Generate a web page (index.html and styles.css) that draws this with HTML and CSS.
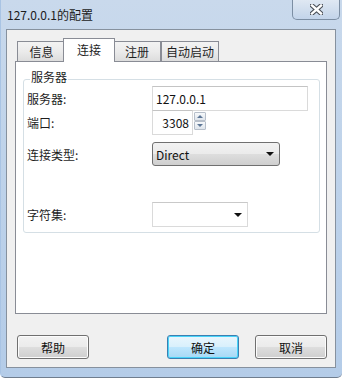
FILE: index.html
```html
<!DOCTYPE html>
<html lang="zh-CN">
<head>
  <meta charset="UTF-8">
  <title>127.0.0.1的配置</title>
  <link rel="stylesheet" href="styles.css">
</head>
<body>

  <div class="window">
    <div class="titlebar">
      <span class="title">127.0.0.1的配置</span>
      <button class="close-btn">
        <svg width="13" height="11" viewBox="0 0 13 11">
          <path d="M2 1.5 L11 9.5 M11 1.5 L2 9.5" stroke="#4a4f57" stroke-width="4.6" stroke-linecap="square" fill="none"/>
          <path d="M2 1.5 L11 9.5 M11 1.5 L2 9.5" stroke="#ffffff" stroke-width="2.4" stroke-linecap="square" fill="none"/>
        </svg>
      </button>
    </div>

    <div class="client">
      <ul class="tabs">
        <li class="tab">信息</li>
        <li class="tab active">连接</li>
        <li class="tab">注册</li>
        <li class="tab wide">自动启动</li>
      </ul>

      <div class="panel">
        <fieldset class="group">
          <legend>服务器</legend>

          <div class="row row-server">
            <label>服务器:</label>
            <input class="text-input" type="text" value="127.0.0.1">
          </div>

          <div class="row row-port">
            <label>端口:</label>
            <input class="text-input port" type="text" value="3308">
            <div class="spin">
              <span class="spin-btn up"></span>
              <span class="spin-btn down"></span>
            </div>
          </div>

          <div class="row row-type">
            <label>连接类型:</label>
            <div class="combo">
              <span>Direct</span>
              <span class="arrow"></span>
            </div>
          </div>

          <div class="row row-charset">
            <label>字符集:</label>
            <div class="combo plain">
              <span></span>
              <span class="arrow"></span>
            </div>
          </div>
        </fieldset>
      </div>

      <div class="buttons">
        <button class="btn">帮助</button>
        <div class="right-buttons">
          <button class="btn default">确定</button>
          <button class="btn">取消</button>
        </div>
      </div>
    </div>
  </div>

</body>
</html>
```

FILE: styles.css
```css
/* General Reset */
body, html {
  margin: 0;
  padding: 0;
  font-family: "Noto Sans CJK SC", "Microsoft YaHei", sans-serif;
  font-size: 12px;
  color: #1e1e1e;
}

ul {
  list-style-type: none;
  margin: 0;
  padding: 0;
}

/* Window Frame */
.window {
  width: 342px;
  height: 378px;
  box-sizing: border-box;
  display: flex;
  flex-direction: column;
  padding: 0 6px 9px 6px;
  background: linear-gradient(to bottom, #c9d9ec 0%, #bfd3ea 40%, #b4cce8 100%);
  border-bottom: 1px solid #6f7d8e;
  border-left: 1px solid #a9c4e4;
  border-radius: 0 0 5px 5px;
}

.titlebar {
  height: 30px;
  display: flex;
  align-items: flex-start;
  margin-left: -1px;
}

.title {
  padding: 6px 0 0 1px;
  line-height: 18px;
  font-size: 12px;
  color: #1b1b1b;
}

.close-btn {
  margin-left: auto;
  margin-right: -4px;
  width: 48px;
  height: 20px;
  padding: 0;
  border: 1px solid #7c8ea3;
  border-top: none;
  border-radius: 0 0 5px 5px;
  background: linear-gradient(to bottom, #dfe8f3 0%, #d1deee 50%, #c3d4ea 100%);
  display: flex;
  align-items: center;
  justify-content: center;
}

/* Client Area */
.client {
  flex: 1;
  display: flex;
  flex-direction: column;
  padding: 8px 8px 8px 8px;
  background: #f0f0f0;
  border: 1px solid #86919e;
  margin-left: -1px;
}

/* Tabs */
.tabs {
  display: flex;
  align-items: flex-end;
  height: 23px;
  padding-left: 2px;
}

.tab {
  width: 48px;
  height: 20px;
  box-sizing: border-box;
  border: 1px solid #898c95;
  border-bottom: none;
  border-right: none;
  background: linear-gradient(to bottom, #f3f3f3 0%, #ebebeb 50%, #dddddd 100%);
  text-align: center;
  line-height: 19px;
}

.tab:nth-child(3) {
  border-right: 1px solid #898c95;
}

.tab.wide {
  width: 58px;
  border-right: 1px solid #898c95;
}

.tab.active {
  width: 52px;
  height: 24px;
  margin: 0 -2px -1px -2px;
  background: #fff;
  border-right: 1px solid #898c95;
  position: relative;
  z-index: 1;
  line-height: 21px;
}

/* Tab Panel */
.panel {
  height: 253px;
  box-sizing: border-box;
  border: 1px solid #898c95;
  background: #fff;
  padding: 9px 6px 0 7px;
}

/* Group Box */
.group {
  margin: 0;
  min-width: 0;
  padding: 0 10px 5px 3px;
  border: 1px solid #d5dfe5;
  border-radius: 3px;
}

.group legend {
  margin-left: 3px;
  padding: 0 1px 4px 1px;
  line-height: 12px;
}

.row {
  display: flex;
  align-items: center;
}

.row label {
  width: 125px;
  flex-shrink: 0;
}

.row-server {
  height: 25px;
  margin-top: -1px;
}

.row-port {
  height: 25px;
  margin-top: -1px;
}

.row-type {
  height: 24px;
  margin-top: 7px;
}

.row-charset {
  height: 25px;
  margin-top: 36px;
}

/* Inputs */
.text-input {
  width: 156px;
  height: 25px;
  box-sizing: border-box;
  margin: 0;
  padding: 0 3px;
  border: 1px solid #dadada;
  border-top-color: #c4c4c4;
  font-family: inherit;
  font-size: 12px;
  color: #111;
  outline: none;
}

.text-input.port {
  width: 41px;
  text-align: right;
  padding-right: 3px;
}

.spin {
  display: flex;
  flex-direction: column;
  margin-left: 1px;
  margin-top: -3px;
}

.spin-btn {
  width: 12px;
  height: 9px;
  box-sizing: border-box;
  border: 1px solid #b7bfca;
  border-radius: 1px;
  background: linear-gradient(to bottom, #f7f9fb, #dfe5ec);
  display: flex;
  align-items: center;
  justify-content: center;
}

.spin-btn::after {
  content: "";
  border-left: 3px solid transparent;
  border-right: 3px solid transparent;
}

.spin-btn.up::after {
  border-bottom: 3px solid #5d7696;
}

.spin-btn.down::after {
  border-top: 3px solid #5d7696;
}

/* Combo Boxes */
.combo {
  width: 128px;
  height: 24px;
  box-sizing: border-box;
  display: flex;
  align-items: center;
  justify-content: space-between;
  padding: 0 4px 0 3px;
  border: 1px solid #707070;
  border-radius: 3px;
  background: linear-gradient(to bottom, #f2f2f2 0%, #ebebeb 48%, #dddddd 52%, #cfcfcf 100%);
  color: #111;
}

.combo.plain {
  width: 96px;
  height: 25px;
  border: 1px solid #dadada;
  border-top-color: #c9c9c9;
  border-radius: 0;
  background: #fff;
}

.arrow {
  width: 0;
  height: 0;
  margin-right: 1px;
  border-left: 4px solid transparent;
  border-right: 4px solid transparent;
  border-top: 4px solid #111;
}

/* Dialog Buttons */
.buttons {
  display: flex;
  justify-content: space-between;
  margin-top: 21px;
  padding-left: 2px;
}

.right-buttons {
  display: flex;
  gap: 16px;
}

.btn {
  width: 72px;
  height: 24px;
  margin: 0;
  padding: 0;
  font-family: inherit;
  font-size: 12px;
  color: #111;
  border: 1px solid #707070;
  border-radius: 3px;
  background: linear-gradient(to bottom, #f2f2f2 0%, #ebebeb 48%, #dddddd 52%, #cfcfcf 100%);
  box-shadow: inset 0 0 0 1px #fcfcfc;
}

.btn.default {
  border-color: #3c7fb1;
  background: linear-gradient(to bottom, #eaf6fd 0%, #d9f0fc 48%, #bee6fd 52%, #a7d9f5 100%);
  box-shadow: inset 0 0 0 1px #48d4f9;
}
```
